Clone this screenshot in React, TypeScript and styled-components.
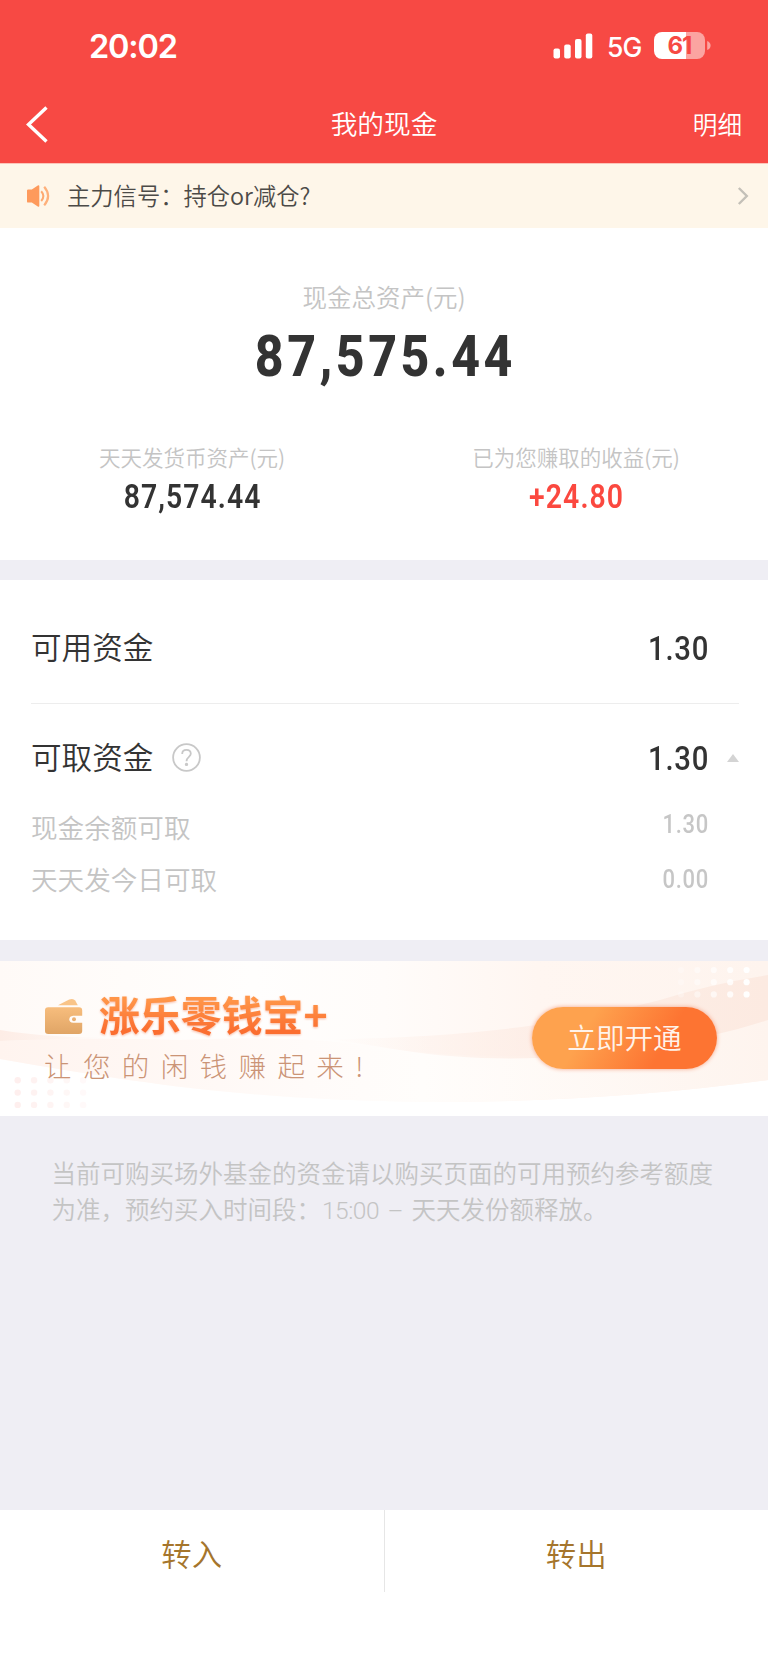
import React from "react";
import styled, { createGlobalStyle } from "styled-components";

const cjk = `"Noto Sans CJK SC", sans-serif`;

const GlobalStyle = createGlobalStyle`
  *, *::before, *::after { box-sizing: border-box; }
  body { margin: 0; background: #efeef4; font-family: ${cjk}; font-weight: 350; color: #333; }
  button { appearance: none; border: 0; margin: 0; padding: 0; background: none; font: inherit; color: inherit; }
  p, h1, h2 { margin: 0; font-weight: inherit; }
  svg { display: block; flex: none; }
`;

const Screen = styled.div`
  width: 768px;
  height: 1662px;
  display: flex;
  flex-direction: column;
  overflow: hidden;
  white-space: nowrap;
  background: #efeef4;
`;

const Header = styled.header`
  height: 163px;
  flex: none;
  background: #f74944;
  color: #fff;
`;

const StatusBar = styled.div`
  height: 92px;
  display: flex;
  justify-content: space-between;
  padding: 0 57px 0 89px;
  font-family: Inter, sans-serif;
`;

const Clock = styled.span`
  font-size: 32.5px;
  line-height: 93px;
  font-weight: 600;
  letter-spacing: -1.2px;
`;

const StatusIcons = styled.div`
  display: flex;
  align-items: center;
  height: 91px;
`;

const Network = styled.span`
  box-sizing: content-box;
  width: 47px;
  margin-top: 3px;
  padding-left: 14px;
  font-size: 26.5px;
  line-height: 36px;
  font-weight: 500;
  letter-spacing: -0.8px;
`;

const BatteryBody = styled.div`
  width: 51px;
  height: 27px;
  border-radius: 8px;
  background: linear-gradient(90deg, #fff 0 32px, #fba4a1 32px);
  color: #f74944;
  font-size: 24px;
  line-height: 27px;
  font-weight: 700;
  text-align: center;
  letter-spacing: -1px;
`;

const NavBar = styled.nav`
  height: 71px;
  display: grid;
  grid-template-columns: 1fr auto 1fr;
  align-items: center;
  padding: 0 26px;
`;

const BackButton = styled.button`
  width: 24px;
  height: 40px;
  margin-top: -8px;
`;

const NavTitle = styled.h1`
  font-size: 26.7px;
  line-height: 40px;
  margin-top: -9px;
`;

const NavAction = styled.button`
  justify-self: end;
  font-size: 24.6px;
  line-height: 40px;
  margin-top: -9px;
`;

const Notice = styled.div`
  height: 65px;
  flex: none;
  display: flex;
  align-items: center;
  padding: 0 19px 0 26px;
  border-top: 1px solid #fcc5b9;
  background: #fef6e9;
`;

const NoticeText = styled.span`
  flex: 1;
  margin: -3px 0 0 17px;
  font-size: 23.3px;
  line-height: 32px;
  color: #4c4a47;
`;

const Summary = styled.section`
  height: 332px;
  flex: none;
  padding-top: 51px;
  text-align: center;
  background: #fff;
`;

const Label = styled.p<{ $size: number }>`
  font-size: ${(p) => p.$size}px;
  line-height: 36px;
  color: #c4c4c4;
`;

const Total = styled.p`
  margin-top: 12px;
  padding-left: 3px;
  font-family: Roboto, sans-serif;
  font-weight: 800;
  font-size: 57.5px;
  line-height: 60px;
  height: 80px;
  letter-spacing: 4px;
  transform: scaleX(0.87);
`;

const Pair = styled.div`
  display: grid;
  grid-template-columns: 1fr 1fr;
  margin-top: 32px;
`;

const Figure = styled.p<{ $color?: string }>`
  margin-top: 2px;
  padding-left: 1.4px;
  font-family: Roboto, sans-serif;
  font-weight: 600;
  font-size: 32.3px;
  line-height: 40px;
  letter-spacing: 1.2px;
  transform: scaleX(0.88);
  color: ${(p) => p.$color ?? "#333"};
`;

const Funds = styled.section`
  height: 360px;
  flex: none;
  margin-top: 20px;
  padding: 0 29px 0 31px;
  background: #fff;
`;

const FundRow = styled.div<{ $divided?: boolean }>`
  height: ${(p) => (p.$divided ? 124 : 96)}px;
  display: flex;
  align-items: center;
  padding-top: 11px;
  ${(p) => (p.$divided ? "border-bottom: 1px solid #ededed;" : "")}
`;

const FundName = styled.span`
  margin: -3px 19px 0 0;
  font-size: 30.6px;
  line-height: 44px;
`;

const Amount = styled.span<{ $small?: boolean; $shift?: number }>`
  margin-left: auto;
  width: 120px;
  margin-right: 30px;
  margin-top: ${(p) => p.$shift ?? 3}px;
  text-align: right;
  font-family: Roboto, sans-serif;
  font-weight: ${(p) => (p.$small ? 500 : 550)};
  font-size: ${(p) => (p.$small ? 25 : 33.3)}px;
  line-height: 40px;
  letter-spacing: 0.8px;
  transform: scaleX(0.88);
  transform-origin: right;
  color: ${(p) => (p.$small ? "#c6c6c6" : "#333")};
`;

const AmountWithMark = styled.div`
  margin-left: auto;
  display: flex;
  align-items: center;
`;

const MarkedAmount = styled(Amount)`
  margin-right: 18px;
`;

const DetailRow = styled.div`
  height: 52px;
  display: flex;
  align-items: center;
  font-size: 26.6px;
  color: #c4c4c4;
`;

const Banner = styled.section`
  position: relative;
  height: 155px;
  flex: none;
  margin-top: 21px;
  padding: 0 51px 0 44px;
  display: flex;
  justify-content: space-between;
  background: #fff;
`;

const BannerArt = styled.svg`
  position: absolute;
  inset: 0;
`;

const BannerCopy = styled.div`
  position: relative;
  padding-top: 27px;
`;

const BannerTitle = styled.div`
  display: flex;
  align-items: center;
  height: 57px;
`;

const BannerName = styled.h2`
  margin: -5px 0 0 15px;
  font-size: 40.9px;
  line-height: 56px;
  font-weight: 700;
  background: linear-gradient(#ff9548 25%, #fb6e30 80%);
  background-clip: text;
  -webkit-background-clip: text;
  color: transparent;
  filter: drop-shadow(0 1px 1px #f8b8a0);
`;

const BannerSlogan = styled.p`
  font-size: 27.5px;
  line-height: 40px;
  font-weight: 300;
  letter-spacing: 11.4px;
  color: #cb9476;
`;

const OpenButton = styled.button`
  position: relative;
  margin-top: 46px;
  width: 185px;
  height: 62px;
  border-radius: 31px;
  background: linear-gradient(120deg, #fea24e 30%, #fd7432 70%);
  box-shadow: 0 0 4px #f4a488;
  color: #fff3ea;
  font-size: 28.6px;
  line-height: 58px;
  padding-bottom: 3px;
`;

const Footnote = styled.p`
  flex: 1;
  padding: 39px 52px 0 51.5px;
  font-size: 24.5px;
  line-height: 36px;
  color: #c4c4c4;
`;

const Time = styled.span`
  padding-left: 1px;
  font-family: Roboto, sans-serif;
  font-weight: 300;
  letter-spacing: -0.5px;
  word-spacing: 3px;
`;

const Footer = styled.footer`
  height: 152px;
  flex: none;
  display: flex;
  align-items: flex-start;
  background: #fff;
`;

const FooterButton = styled.button`
  flex: 1;
  height: 82px;
  padding-top: 2px;
  font-size: 30.4px;
  line-height: 82px;
  color: #a5752c;
  & + & { border-left: 1px solid #e6e6e6; }
`;

const dotCols = [0, 1, 2, 3, 4];
const dotRows = [0, 1, 2];

const SignalIcon = () => (
  <svg width="40" height="26" viewBox="0 0 40 26" fill="#fff">
    <rect x="0.5" y="15.5" width="6.5" height="10" rx="2" />
    <rect x="11.2" y="11.5" width="6.5" height="14" rx="2" />
    <rect x="22" y="6" width="6.5" height="19.5" rx="2" />
    <rect x="32.8" y="0.5" width="6.5" height="25" rx="2" />
  </svg>
);

const SpeakerIcon = () => (
  <svg width="24" height="24" viewBox="0 0 24 24">
    <path d="M1 6.6Q1 5.6 2.2 5.6H5.8L11.8 1.4Q13.3.6 13.3 2.2V21.8Q13.3 23.4 11.8 22.6L5.8 18.6H2.2Q1 18.6 1 17.4Z" fill="#fe9a5c" />
    <path d="M15.2 7.2Q19.6 12 15.2 17" fill="none" stroke="#fea970" strokeWidth="2" />
    <path d="M18.2 2.8Q26 12 18.2 21.4" fill="none" stroke="#feb07b" strokeWidth="2.2" />
  </svg>
);

const WalletIcon = () => (
  <svg width="40" height="38" viewBox="0 0 40 38">
    <defs>
      <linearGradient id="wallet" x1="0" y1="0" x2="0" y2="1">
        <stop offset="0" stopColor="#f7bd7d" />
        <stop offset="1" stopColor="#e0a566" />
      </linearGradient>
    </defs>
    <path d="M14 7.2L25.2 1.6Q29.2 0 31.2 2.6L33.8 7.2Z" fill="#f9c488" />
    <path d="M4.2 9.2H35Q38.2 9.2 38.2 12.2V17.8H29.2Q25.2 18.2 25.2 21.2T29.2 24.8H38.2V33Q38.2 36 35 36H4.2Q1 36 1 33V12.2Q1 9.2 4.2 9.2Z" fill="url(#wallet)" />
    <circle cx="30" cy="21.2" r="2" fill="#eab073" />
  </svg>
);

const BannerBackdrop = () => (
  <BannerArt width="768" height="155" viewBox="0 0 768 155">
    <defs>
      <linearGradient id="base">
        <stop offset="0" stopColor="#fffaf7" />
        <stop offset="0.33" stopColor="#fffefd" />
        <stop offset="0.5" stopColor="#fffcfa" />
        <stop offset="0.7" stopColor="#fff6f1" />
        <stop offset="1" stopColor="#fef4ee" />
      </linearGradient>
      <linearGradient id="leftBand">
        <stop offset="0" stopColor="#fdede6" />
        <stop offset="1" stopColor="#fdede6" stopOpacity="0" />
      </linearGradient>
      <linearGradient id="rightBand">
        <stop offset="0" stopColor="#fdeae1" stopOpacity="0" />
        <stop offset="0.45" stopColor="#fdece4" stopOpacity="0.75" />
        <stop offset="1" stopColor="#fceae1" />
      </linearGradient>
      <linearGradient id="lower">
        <stop offset="0" stopColor="#fff4ef" />
        <stop offset="0.4" stopColor="#fffbf9" />
        <stop offset="0.55" stopColor="#fffdfb" />
        <stop offset="1" stopColor="#fef4ee" />
      </linearGradient>
    </defs>
    <path d="M0 0H768V119Q610 141 430 141C250 139 150 124 0 98Z" fill="url(#base)" />
    <path d="M0 80Q90 76 180 79Q300 73 384 87Q560 112 768 59V119Q610 141 430 141C250 139 150 124 0 98Z" fill="url(#lower)" />
    <path d="M0 69Q50 77 120 77Q50 78 0 80Z" fill="url(#leftBand)" />
    <path d="M330 78C500 76 590 57 660 39Q710 23 768 14V59C670 91 520 109 400 89Z" fill="url(#rightBand)" />
    {dotRows.map((r) =>
      dotCols.map((c) => (
        <React.Fragment key={`${r}-${c}`}>
          <circle cx={17.7 + c * 16.35} cy={119.3 + r * 12.3} r="3.2" fill="#feefee" opacity={1 - c * 0.16} />
          <circle cx={681 + c * 16.4} cy={9 + r * 12.2} r="3.1" fill="#fff" opacity={0.25 + c * 0.18} />
        </React.Fragment>
      ))
    )}
  </BannerArt>
);

export default function App() {
  return (
    <Screen>
      <GlobalStyle />
      <Header>
        <StatusBar>
          <Clock>20:02</Clock>
          <StatusIcons>
            <SignalIcon />
            <Network>5G</Network>
            <BatteryBody>61</BatteryBody>
            <svg width="6" height="9" viewBox="0 0 6 9">
              <path d="M2.2 0Q5.6 1.5 5.6 4.5T2.2 9Z" fill="#fba4a1" />
            </svg>
          </StatusIcons>
        </StatusBar>
        <NavBar>
          <BackButton aria-label="返回">
            <svg width="24" height="40" viewBox="0 0 24 40">
              <path d="M20.5 3.5L2.5 20.5L20.5 37.5" fill="none" stroke="#fff" strokeWidth="3.4" />
            </svg>
          </BackButton>
          <NavTitle>我的现金</NavTitle>
          <NavAction>明细</NavAction>
        </NavBar>
      </Header>

      <Notice>
        <SpeakerIcon />
        <NoticeText>主力信号：持仓or减仓?</NoticeText>
        <svg width="12" height="20" viewBox="0 0 12 20">
          <path d="M1.8 2L9.8 10L1.8 18" fill="none" stroke="#c4c0b8" strokeWidth="2.4" />
        </svg>
      </Notice>

      <Summary>
        <Label $size={24.5}>现金总资产(元)</Label>
        <Total>87,575.44</Total>
        <Pair>
          <div>
            <Label $size={21.5}>天天发货币资产(元)</Label>
            <Figure>87,574.44</Figure>
          </div>
          <div>
            <Label $size={21.5}>已为您赚取的收益(元)</Label>
            <Figure $color="#fb483f">+24.80</Figure>
          </div>
        </Pair>
      </Summary>

      <Funds>
        <FundRow $divided>
          <FundName>可用资金</FundName>
          <Amount>1.30</Amount>
        </FundRow>
        <FundRow>
          <FundName>可取资金</FundName>
          <svg width="29" height="29" viewBox="0 0 29 29" fill="none" stroke="#c8c8c8" strokeWidth="1.8">
            <circle cx="14.5" cy="14.5" r="13.4" />
            <path d="M10.2 11Q10.2 6.8 14.5 6.8T18.8 10.8C18.8 13.8 14.5 14 14.5 18.2" />
            <circle cx="14.5" cy="21.4" r="0.8" />
          </svg>
          <AmountWithMark>
            <MarkedAmount>1.30</MarkedAmount>
            <svg width="12" height="8" viewBox="0 0 12 8">
              <path d="M6 0L12 8H0Z" fill="#d4d4d4" />
            </svg>
          </AmountWithMark>
        </FundRow>
        <DetailRow>
          现金余额可取<Amount $small $shift={-3}>1.30</Amount>
        </DetailRow>
        <DetailRow>
          天天发今日可取<Amount $small $shift={4}>0.00</Amount>
        </DetailRow>
      </Funds>

      <Banner>
        <BannerBackdrop />
        <BannerCopy>
          <BannerTitle>
            <WalletIcon />
            <BannerName>涨乐零钱宝+</BannerName>
          </BannerTitle>
          <BannerSlogan>让您的闲钱赚起来!</BannerSlogan>
        </BannerCopy>
        <OpenButton>立即开通</OpenButton>
      </Banner>

      <Footnote>
        当前可购买场外基金的资金请以购买页面的可用预约参考额度
        <br />
        为准，预约买入时间段：<Time>15:00 – </Time>天天发份额释放。
      </Footnote>

      <Footer>
        <FooterButton>转入</FooterButton>
        <FooterButton>转出</FooterButton>
      </Footer>
    </Screen>
  );
}
